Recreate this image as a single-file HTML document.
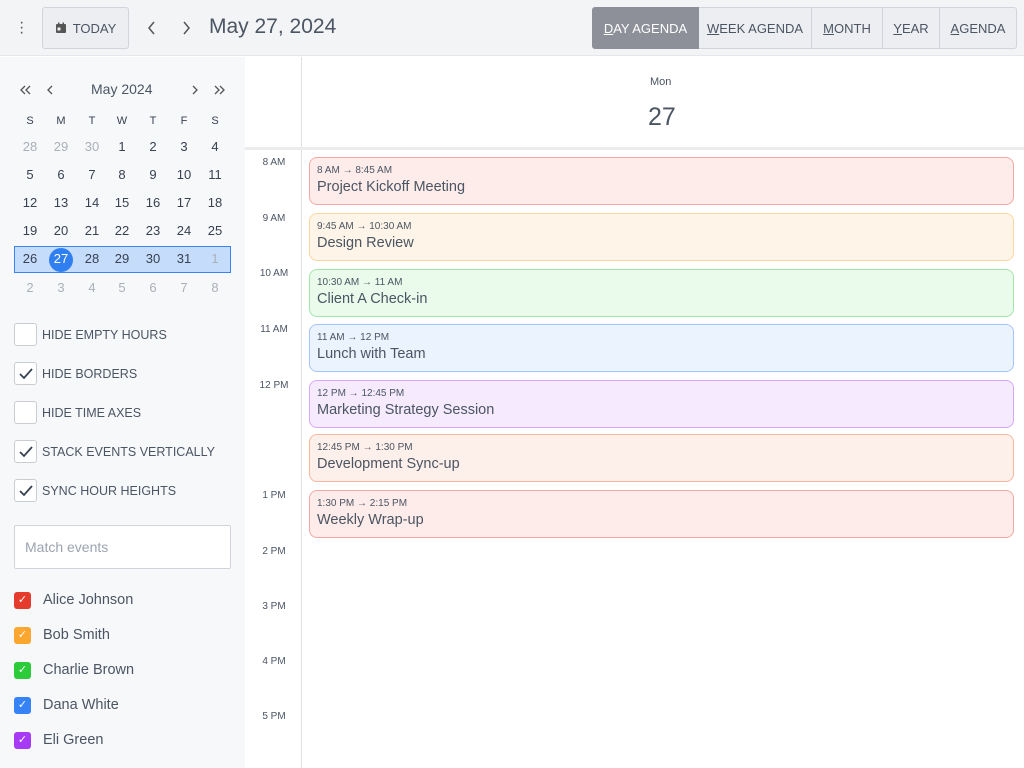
<!DOCTYPE html>
<html><head><style>
*{box-sizing:border-box;margin:0;padding:0}
body{width:1024px;height:768px;overflow:hidden;font-family:"Liberation Sans",sans-serif;color:#374151;background:#fff;position:relative}
.abs{position:absolute}
#hdr{left:0;top:0;width:1024px;height:56px;background:#f3f4f6;border-bottom:1px solid #e5e7eb}
.btn{border:1px solid #d1d5db;background:#eceef1;font-size:13px;color:#4b5563;display:flex;align-items:center;justify-content:center}
#side{left:0;top:57px;width:245px;height:711px;background:#f7f8fa}
.cal div{position:absolute;width:30px;text-align:center;font-size:13px;color:#374151}
.cb{position:absolute;left:14px;width:23px;height:23px;border:1px solid #c9ccd1;border-radius:3px;background:#fff}
.lbl{position:absolute;left:42px;font-size:12.5px;color:#4b5563}
.ev{position:absolute;left:309px;width:705px;height:48px;border-radius:8px;border:1px solid;padding:7px 7px}
.ev .t{font-size:10px;color:#4b5563}
.ev .n{font-size:14.5px;color:#4b5563;margin-top:3px}
.hr{position:absolute;left:250px;width:48px;text-align:center;font-size:10px;color:#4b5563}
.pc{position:absolute;left:14px;width:17px;height:17px;border-radius:3px;color:#fff;font-size:11px;text-align:center;line-height:17px}
.pn{position:absolute;left:43px;font-size:14.5px;color:#4b5563}
</style></head><body>
<div id="hdr" class="abs">
 <div class="abs" style="left:19px;top:20px;width:4px;font-size:16px;color:#555;line-height:5px">·<br>·<br>·</div>
 <div class="abs btn" style="left:42px;top:7px;width:87px;height:42px;border-radius:3px">
  <svg width="12" height="12" viewBox="0 0 12 12" style="margin-right:6px"><rect x="1" y="2" width="10" height="9" rx="1" fill="#555"/><rect x="3" y="0.5" width="1.5" height="3" fill="#555"/><rect x="7.5" y="0.5" width="1.5" height="3" fill="#555"/><rect x="2.5" y="5.5" width="3" height="3" fill="#eceef1"/></svg>TODAY</div>
 <svg class="abs" style="left:145px;top:20px" width="14" height="16"><path d="M9 2 L4 8 L9 14" fill="none" stroke="#555" stroke-width="1.5"/></svg>
 <svg class="abs" style="left:179px;top:20px" width="14" height="16"><path d="M5 2 L10 8 L5 14" fill="none" stroke="#555" stroke-width="1.5"/></svg>
 <div class="abs" style="left:209px;top:15px;font-size:21px;color:#4b5563">May 27, 2024</div>
 <div class="abs" style="left:592px;top:7px;height:42px;display:flex">
  <div class="btn" style="width:107px;background:#8e9099;color:#fff;border-color:#8e9099;border-radius:3px 0 0 3px"><u>D</u>AY AGENDA</div>
  <div class="btn" style="width:113px;border-left:none"><u>W</u>EEK AGENDA</div>
  <div class="btn" style="width:71px;border-left:none"><u>M</u>ONTH</div>
  <div class="btn" style="width:57px;border-left:none"><u>Y</u>EAR</div>
  <div class="btn" style="width:77px;border-left:none;border-radius:0 3px 3px 0"><u>A</u>GENDA</div>
 </div>
</div>
<div id="side" class="abs"></div>
<svg class="abs" style="left:18px;top:83px" width="220" height="14"><g fill="none" stroke="#555" stroke-width="1.3"><path d="M7 3 L3 7 L7 11 M12 3 L8 7 L12 11"/><path d="M34 3 L30 7 L34 11"/><path d="M175 3 L179 7 L175 11"/><path d="M197 3 L201 7 L197 11 M202 3 L206 7 L202 11"/></g></svg>
<div class="abs" style="left:91px;top:81px;font-size:14px;color:#4b5563">May 2024</div>
<div class="abs" style="left:14px;top:246px;width:217px;height:27px;background:#c6dcfb;border:1px solid #3b82f6"></div>
<div class="abs" style="left:49px;top:248px;width:24px;height:24px;border-radius:50%;background:#2f7ff0"></div>
<div class="cal" id="cal"></div>
<div class="cb" style="top:323px"></div><div class="lbl" style="top:328px">HIDE EMPTY HOURS</div>
<div class="cb" style="top:362px"></div><div class="lbl" style="top:367px">HIDE BORDERS</div>
<div class="cb" style="top:401px"></div><div class="lbl" style="top:406px">HIDE TIME AXES</div>
<div class="cb" style="top:440px"></div><div class="lbl" style="top:445px">STACK EVENTS VERTICALLY</div>
<div class="cb" style="top:479px"></div><div class="lbl" style="top:484px">SYNC HOUR HEIGHTS</div>
<div class="abs" style="left:14px;top:525px;width:217px;height:44px;background:#fff;border:1px solid #d1d5db;border-radius:2px;padding:13px 10px;font-size:14px;color:#9ca3af">Match events</div>
<div class="pc" style="top:592px;background:#e53b2c">✓</div><div class="pn" style="top:592px">Alice Johnson</div>
<div class="pc" style="top:627px;background:#fba62f">✓</div><div class="pn" style="top:627px">Bob Smith</div>
<div class="pc" style="top:662px;background:#2ccb3a">✓</div><div class="pn" style="top:662px">Charlie Brown</div>
<div class="pc" style="top:697px;background:#3583f6">✓</div><div class="pn" style="top:697px">Dana White</div>
<div class="pc" style="top:732px;background:#a63af5">✓</div><div class="pn" style="top:732px">Eli Green</div>
<div class="abs" style="left:301px;top:57px;width:1px;height:711px;background:#e0e0e0"></div>
<div class="abs" style="left:245px;top:147px;width:779px;height:3px;background:#ececec"></div>
<div class="abs" style="left:650px;top:76px;font-size:11px;color:#4b5563">Mon</div>
<div class="abs" style="left:648px;top:103px;font-size:25px;color:#4b5563">27</div>
<div class="hr" style="top:157px">8 AM</div><div class="hr" style="top:213px">9 AM</div><div class="hr" style="top:268px">10 AM</div><div class="hr" style="top:324px">11 AM</div><div class="hr" style="top:380px">12 PM</div><div class="hr" style="top:490px">1 PM</div><div class="hr" style="top:546px">2 PM</div><div class="hr" style="top:601px">3 PM</div><div class="hr" style="top:656px">4 PM</div><div class="hr" style="top:711px">5 PM</div>
<div class="ev" style="top:157px;background:#fdecea;border-color:#f3a9a3"><div class="t">8 AM → 8:45 AM</div><div class="n">Project Kickoff Meeting</div></div>
<div class="ev" style="top:213px;background:#fef5e8;border-color:#fcd79f"><div class="t">9:45 AM → 10:30 AM</div><div class="n">Design Review</div></div>
<div class="ev" style="top:269px;background:#eafaeb;border-color:#a3e5a8"><div class="t">10:30 AM → 11 AM</div><div class="n">Client A Check-in</div></div>
<div class="ev" style="top:324px;background:#ebf3fe;border-color:#a4c6fa"><div class="t">11 AM → 12 PM</div><div class="n">Lunch with Team</div></div>
<div class="ev" style="top:380px;background:#f6ebfe;border-color:#d7a7fa"><div class="t">12 PM → 12:45 PM</div><div class="n">Marketing Strategy Session</div></div>
<div class="ev" style="top:434px;background:#fdefe9;border-color:#f7b6a0"><div class="t">12:45 PM → 1:30 PM</div><div class="n">Development Sync-up</div></div>
<div class="ev" style="top:490px;background:#fdecea;border-color:#f3a9a3"><div class="t">1:30 PM → 2:15 PM</div><div class="n">Weekly Wrap-up</div></div>
<script>
var c=document.getElementById('cal'),xs=[15,46,77,107,138,169,200],h='';
['S','M','T','W','T','F','S'].forEach(function(d,i){h+='<div style="left:'+xs[i]+'px;top:115px;font-size:11px">'+d+'</div>'});
var rows=[[28,29,30,1,2,3,4],[5,6,7,8,9,10,11],[12,13,14,15,16,17,18],[19,20,21,22,23,24,25],[26,27,28,29,30,31,1],[2,3,4,5,6,7,8]],ys=[139,167,195,223,251,280];
rows.forEach(function(r,ri){r.forEach(function(d,i){var col='#374151';if((ri==0&&i<3)||ri==5||(ri==4&&i==6))col='#aab0b8';if(ri==4&&i==1)col='#fff';h+='<div style="left:'+xs[i]+'px;top:'+ys[ri]+'px;color:'+col+'">'+d+'</div>'})});
c.innerHTML=h;
</script>
<svg class="abs" style="left:14px;top:323px" width="240" height="200"><g fill="none" stroke="#374151" stroke-width="1.8"><path d="M6 51 l4 4 l8 -9"/><path d="M6 129 l4 4 l8 -9"/><path d="M6 168 l4 4 l8 -9"/></g></svg>
</body></html>
